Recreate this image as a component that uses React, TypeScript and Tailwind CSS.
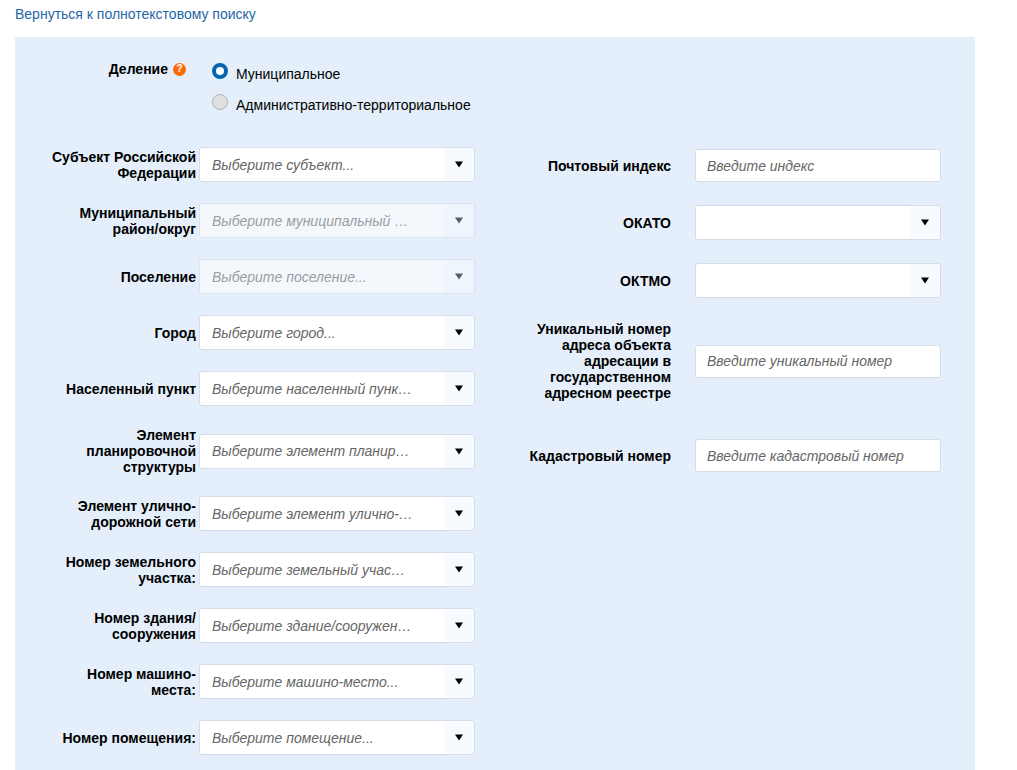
import { useId, type ReactNode } from "react";

type Field = {
  label: string;
  placeholder?: string;
  kind: "select" | "input";
  disabled?: boolean;
  separated?: boolean;
};

const addressFields: Field[] = [
  { label: "Субъект Российской Федерации", placeholder: "Выберите субъект...", kind: "select" },
  { label: "Муниципальный район/округ", placeholder: "Выберите муниципальный …", kind: "select", disabled: true },
  { label: "Поселение", placeholder: "Выберите поселение...", kind: "select", disabled: true },
  { label: "Город", placeholder: "Выберите город...", kind: "select" },
  { label: "Населенный пункт", placeholder: "Выберите населенный пунк…", kind: "select" },
  { label: "Элемент планировочной структуры", placeholder: "Выберите элемент планир…", kind: "select" },
  { label: "Элемент улично-дорожной сети", placeholder: "Выберите элемент улично-…", kind: "select" },
  { label: "Номер земельного участка:", placeholder: "Выберите земельный учас…", kind: "select" },
  { label: "Номер здания/ сооружения", placeholder: "Выберите здание/сооружен…", kind: "select" },
  { label: "Номер машино-места:", placeholder: "Выберите машино-место...", kind: "select" },
  { label: "Номер помещения:", placeholder: "Выберите помещение...", kind: "select" },
];

const codeFields: Field[] = [
  { label: "Почтовый индекс", placeholder: "Введите индекс", kind: "input" },
  { label: "ОКАТО", kind: "select" },
  { label: "ОКТМО", kind: "select" },
  {
    label: "Уникальный номер адреса объекта адресации в государственном адресном реестре",
    placeholder: "Введите уникальный номер",
    kind: "input",
  },
  { label: "Кадастровый номер", placeholder: "Введите кадастровый номер", kind: "input", separated: true },
];

function SelectBox({ id, placeholder = "", disabled }: { id: string; placeholder?: string; disabled?: boolean }) {
  return (
    <div
      className={`grid h-[35px] min-w-0 flex-1 grid-cols-[1fr_30px] overflow-hidden rounded-[3px] border border-[#d6dde6] bg-white ${
        disabled ? "opacity-60" : ""
      }`}
    >
      <select
        id={id}
        disabled={disabled}
        defaultValue=""
        className="col-span-2 col-start-1 row-start-1 w-full appearance-none truncate bg-transparent pr-8 pl-3 text-sm text-[#666] italic opacity-100 outline-none"
      >
        <option value="">{placeholder}</option>
      </select>
      <span className="pointer-events-none col-start-2 row-start-1 flex items-center justify-center bg-[#f7fafe]">
        <svg width="8" height="7" viewBox="0 0 8 7" aria-hidden="true">
          <path d="M0 0.5h8L4 6.5z" fill="#000" />
        </svg>
      </span>
    </div>
  );
}

function FieldRow({ field, gap }: { field: Field; gap: string }) {
  const id = useId();
  return (
    <div className={`flex items-center ${gap} ${field.separated ? "mt-[15px]" : ""}`}>
      <label htmlFor={id} className="w-[145px] shrink-0 text-right text-sm leading-4 font-bold">
        {field.label}
      </label>
      {field.kind === "select" ? (
        <SelectBox id={id} placeholder={field.placeholder} disabled={field.disabled} />
      ) : (
        <input
          id={id}
          type="text"
          placeholder={field.placeholder}
          className="h-[33px] min-w-0 flex-1 rounded-[3px] border border-[#d6dde6] bg-white px-[11px] text-sm italic outline-none placeholder:text-[#666]"
        />
      )}
    </div>
  );
}

function RadioOption({ value, checked, children }: { value: string; checked?: boolean; children: ReactNode }) {
  return (
    <label className="flex items-start gap-2 text-sm leading-5">
      <input
        type="radio"
        name="division"
        value={value}
        defaultChecked={checked}
        className="size-4 shrink-0 appearance-none rounded-full border border-[#b4b4b4] bg-[#e0e0e0] checked:border-4 checked:border-[#0565ae] checked:bg-white"
      />
      <span className="pt-px">{children}</span>
    </label>
  );
}

export default function App() {
  return (
    <main className="bg-white px-[15px] font-['Liberation_Sans',Arial,sans-serif] text-black">
      <a href="#search" className="block pt-1 text-sm leading-5 text-[#1f66a5]">
        Вернуться к полнотекстовому поиску
      </a>
      <form className="mt-[13px] max-w-[960px] bg-[#e4effb] pt-[22px] pr-[34px] pb-4 pl-9">
        <div role="radiogroup" aria-labelledby="division-label" className="flex items-start gap-[26px]">
          <div className="flex w-[135px] items-center justify-end gap-[5px]">
            <span id="division-label" className="text-sm leading-5 font-bold">
              Деление
            </span>
            <button
              type="button"
              aria-label="Справка"
              className="flex size-[13px] items-center justify-center rounded-full bg-[#fb6a07] text-[10px] leading-none font-bold text-white"
            >
              ?
            </button>
          </div>
          <div className="flex flex-col gap-[10px] pt-1">
            <RadioOption value="municipal" checked>
              Муниципальное
            </RadioOption>
            <RadioOption value="administrative">Административно-территориальное</RadioOption>
          </div>
        </div>
        <div className="mt-8 grid grid-cols-[424fr_415fr] items-start gap-x-[51px]">
          <div className="flex flex-col gap-[21px]">
            {addressFields.map((field) => (
              <FieldRow key={field.label} field={field} gap="gap-[3px]" />
            ))}
          </div>
          <div className="flex flex-col gap-[23px] pt-0.5">
            {codeFields.map((field) => (
              <FieldRow key={field.label} field={field} gap="gap-6" />
            ))}
          </div>
        </div>
      </form>
    </main>
  );
}
